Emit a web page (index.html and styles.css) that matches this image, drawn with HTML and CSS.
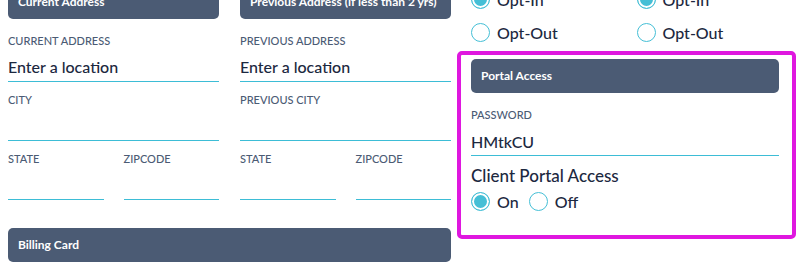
FILE: index.html
```html
<html>
    <head>
        <link rel="stylesheet" href="styles.css">
    </head>
    <body>
        <div class="page">
            <div class="left">
                <div class="cols">
                    <div class="col">
                        <div class="bar">Current Address</div>
                        <div class="field first">
                            <div class="lbl">Current Address</div>
                            <div class="inp">Enter a location</div>
                        </div>
                        <div class="field">
                            <div class="lbl">City</div>
                            <div class="inp"></div>
                        </div>
                        <div class="pair">
                            <div class="field">
                                <div class="lbl">State</div>
                                <div class="inp"></div>
                            </div>
                            <div class="field">
                                <div class="lbl">Zipcode</div>
                                <div class="inp"></div>
                            </div>
                        </div>
                    </div>
                    <div class="col">
                        <div class="bar">Previous Address (if less than 2 yrs)</div>
                        <div class="field first">
                            <div class="lbl">Previous Address</div>
                            <div class="inp">Enter a location</div>
                        </div>
                        <div class="field">
                            <div class="lbl">Previous City</div>
                            <div class="inp"></div>
                        </div>
                        <div class="pair">
                            <div class="field">
                                <div class="lbl">State</div>
                                <div class="inp"></div>
                            </div>
                            <div class="field">
                                <div class="lbl">Zipcode</div>
                                <div class="inp"></div>
                            </div>
                        </div>
                    </div>
                </div>
                <div class="bar billing">Billing Card</div>
            </div>
            <div class="right">
                <div class="opts">
                    <div class="opt"><span class="radio on"></span>Opt-In</div>
                    <div class="opt"><span class="radio on"></span>Opt-In</div>
                    <div class="opt"><span class="radio"></span>Opt-Out</div>
                    <div class="opt"><span class="radio"></span>Opt-Out</div>
                </div>
                <div class="portal">
                    <div class="bar">Portal Access</div>
                    <div class="field pw">
                        <div class="lbl">Password</div>
                        <div class="inp">HMtkCU</div>
                    </div>
                    <div class="title">Client Portal Access</div>
                    <div class="switch">
                        <div class="opt"><span class="radio on"></span>On</div>
                        <div class="opt"><span class="radio"></span>Off</div>
                    </div>
                </div>
            </div>
        </div>
    </body>
</html>
```

FILE: styles.css
```css
body{
    margin:0;
    background-color:#fff;
    font-family:Lato, "Open Sans", sans-serif;
    color:#1c2840;
    overflow:hidden;
}
.page{
    display:flex;
    gap:6px;
    margin-top:-15px;
    padding-left:8px;
}
.left{
    width:443px;
}
.cols{
    display:grid;
    grid-template-columns:211px 211px;
    column-gap:21px;
}
.bar{
    height:34px;
    line-height:34px;
    padding-left:10px;
    background-color:#4b5b74;
    border-radius:5px;
    color:#fff;
    font-size:12px;
    font-weight:700;
    white-space:nowrap;
    overflow:hidden;
}
.field{
    margin-top:11px;
}
.field.first{
    margin-top:15px;
}
.lbl{
    font-size:11px;
    line-height:14px;
    font-weight:500;
    color:#4b5b74;
    text-transform:uppercase;
}
.inp{
    height:33px;
    line-height:38px;
    border-bottom:1px solid #3dbdd6;
    font-size:16px;
    font-weight:500;
    color:#1c2840;
}
.pair{
    display:grid;
    grid-template-columns:1fr 1fr;
    column-gap:20px;
}
.pair .field{
    margin-top:11px;
}
.billing{
    margin-top:28px;
}
.right{
    width:339px;
}
.opts{
    display:grid;
    grid-template-columns:1fr 1fr;
    margin-top:-2px;
    padding:0 4px;
}
.opts .opt{
    height:33px;
    padding-left:10px;
}
.opt{
    display:flex;
    align-items:center;
    gap:7px;
    font-size:16px;
    font-weight:500;
    color:#1c2840;
}
.radio{
    width:17px;
    height:17px;
    border:1.5px solid #45bfd6;
    border-radius:50%;
    background-color:#fff;
}
.radio.on{
    background-color:#45bfd6;
    box-shadow:inset 0 0 0 2px #fff;
}
.portal{
    margin-top:2px;
    height:176px;
    border:4px solid #df17df;
    border-radius:5px;
    padding:4px 13px 0 10px;
}
.field.pw{
    margin-top:15px;
}
.pw .inp{
    line-height:40px;
}
.title{
    margin-top:10px;
    font-size:17px;
    font-weight:500;
    line-height:20px;
}
.switch{
    display:flex;
    gap:10px;
    margin-top:4px;
}
.switch .opt{
    height:22px;
}
```
